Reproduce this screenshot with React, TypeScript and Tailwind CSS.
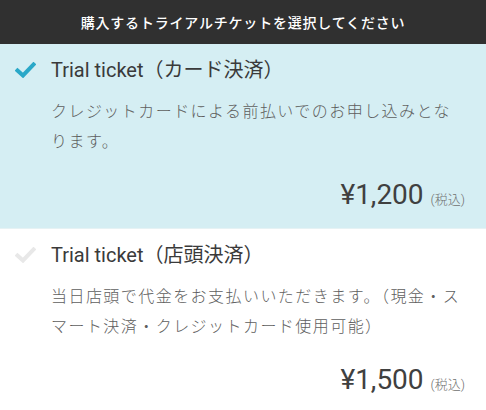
const tickets = [
  {
    title: 'Trial ticket（カード決済）',
    body: 'クレジットカードによる前払いでのお申し込みとなります。',
    price: '¥1,200',
    selected: true,
  },
  {
    title: 'Trial ticket（店頭決済）',
    body: '当日店頭で代金をお支払いいただきます。（現金・スマート決済・クレジットカード使用可能）',
    price: '¥1,500',
    selected: false,
  },
]

function Check({ active }: { active: boolean }) {
  return (
    <svg
      width="21"
      height="16"
      viewBox="0 0 21 16"
      className={active ? 'text-[#2aa8c8]' : 'text-[#e8e8e8]'}
    >
      <path
        d="M2.5 8.5 L8 13.5 L18.5 2.5"
        fill="none"
        stroke="currentColor"
        strokeWidth="4"
        strokeLinecap="square"
        strokeLinejoin="miter"
      />
    </svg>
  )
}

export default function App() {
  return (
    <div className="w-[486px] h-[410px] overflow-hidden bg-white font-['Roboto','Noto_Sans_CJK_JP',sans-serif]">
      {/* Header */}
      <div className="h-[44px] bg-[#303030] flex items-center justify-center">
        <p className="text-white text-[14px] font-medium tracking-[0.8px] font-['Noto_Sans_CJK_JP',sans-serif]">
          購入するトライアルチケットを選択してください
        </p>
      </div>

      {tickets.map((t) => (
        <div
          key={t.title}
          className={`flex pt-[11px] pb-[15px] pr-[21px] ${
            t.selected ? 'bg-[#d5eef3]' : 'bg-white border-t border-[#e6f2f4]'
          }`}
        >
          <div className="w-[51px] pl-[15px] h-[30px] flex items-center shrink-0">
            <Check active={t.selected} />
          </div>
          <div className="flex-1">
            <h2 className="text-[20px] leading-[30px] text-[#3a3a3a]">{t.title}</h2>
            <p className="mt-[10px] text-[16px] leading-[30px] tracking-[1.45px] font-light text-[#5e5e5e] font-['Noto_Sans_CJK_JP',sans-serif]">
              {t.body}
            </p>
            <div className="mt-[22px] flex items-baseline justify-end gap-[7px]">
              <span className="text-[28px] leading-[36px] text-[#404040]">{t.price}</span>
              <span className="text-[13px] text-[#707070] font-light">(税込)</span>
            </div>
          </div>
        </div>
      ))}
    </div>
  )
}
